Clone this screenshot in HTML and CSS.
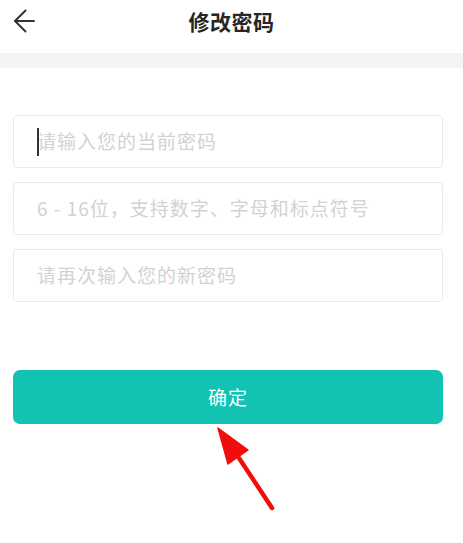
FILE: index.html
```html
<!DOCTYPE html>
<html lang="zh-CN">
<head>
<meta charset="utf-8">
<title>修改密码</title>
<link rel="stylesheet" href="styles.css">
</head>
<body>
<div class="page">
  <header class="topbar">
    <button class="back" aria-label="返回">
      <svg width="24" height="26" viewBox="0 0 24 26" fill="none" stroke="#333" stroke-width="2" stroke-linecap="round" stroke-linejoin="round">
        <path d="M12.5 1.5 L2 12 L12.5 22.5"/>
        <path d="M2 12 H21"/>
      </svg>
    </button>
    <h1 class="title">修改密码</h1>
    <span class="spacer"></span>
  </header>
  <div class="strip"></div>
  <form class="form">
    <div class="field">
      <span class="caret"></span>
      <input type="password" placeholder="请输入您的当前密码">
    </div>
    <div class="field">
      <input type="password" placeholder="6 - 16位，支持数字、字母和标点符号">
    </div>
    <div class="field">
      <input type="password" placeholder="请再次输入您的新密码">
    </div>
    <button type="button" class="submit">确定</button>
  </form>
  <svg class="annot" width="463" height="543" viewBox="0 0 463 543">
    <line x1="235" y1="452" x2="272" y2="508" stroke="#f20d0d" stroke-width="4.5" stroke-linecap="round"/>
    <polygon points="218,428 228,464 248,450" fill="#f20d0d" stroke="#f20d0d" stroke-width="1.5" stroke-linejoin="round"/>
  </svg>
</div>
</body>
</html>
```

FILE: styles.css
```css
* { box-sizing: border-box; }
html, body {
  margin: 0;
  padding: 0;
  background: #fff;
}
body {
  font-family: "Noto Sans CJK SC", "Noto Sans", sans-serif;
  width: 463px;
  height: 543px;
  overflow: hidden;
}
.page {
  position: relative;
  height: 543px;
}
.topbar {
  height: 53px;
  display: grid;
  grid-template-columns: 56px 1fr 56px;
  align-items: center;
}
.back {
  border: 0;
  background: none;
  padding: 0 0 10px 13px;
  display: flex;
  align-items: center;
  justify-content: flex-start;
  height: 53px;
}
.title {
  margin: 0 0 10px;
  text-align: center;
  font-size: 21px;
  font-weight: 700;
  color: #262626;
  line-height: 1;
  letter-spacing: 0.5px;
}
.strip {
  height: 15px;
  background: #f4f4f4;
}
.form {
  padding: 47px 20px 0 13px;
  display: flex;
  flex-direction: column;
  gap: 14px;
}
.field {
  position: relative;
  height: 53px;
  border: 1px solid #ebebeb;
  border-radius: 4px;
  background: #fff;
}
.field input {
  width: 100%;
  height: 100%;
  border: 0;
  outline: none;
  background: transparent;
  padding: 0 0 3px 23px;
  font-family: "Noto Sans CJK SC", "Noto Sans", sans-serif;
  font-size: 19px;
  letter-spacing: 1px;
  color: #333;
}
.field input::placeholder {
  color: #d2d2d2;
}
.caret {
  position: absolute;
  left: 23px;
  top: 12px;
  width: 1.5px;
  height: 28px;
  background: #333;
}
.submit {
  margin-top: 54px;
  height: 54px;
  border: 0;
  border-radius: 7px;
  background: #12c2b3;
  color: #fff;
  font-family: "Noto Sans CJK SC", "Noto Sans", sans-serif;
  font-size: 19px;
  letter-spacing: 1px;
  padding: 0 0 2px;
}
.annot {
  position: absolute;
  left: 0;
  top: 0;
  pointer-events: none;
}
```
